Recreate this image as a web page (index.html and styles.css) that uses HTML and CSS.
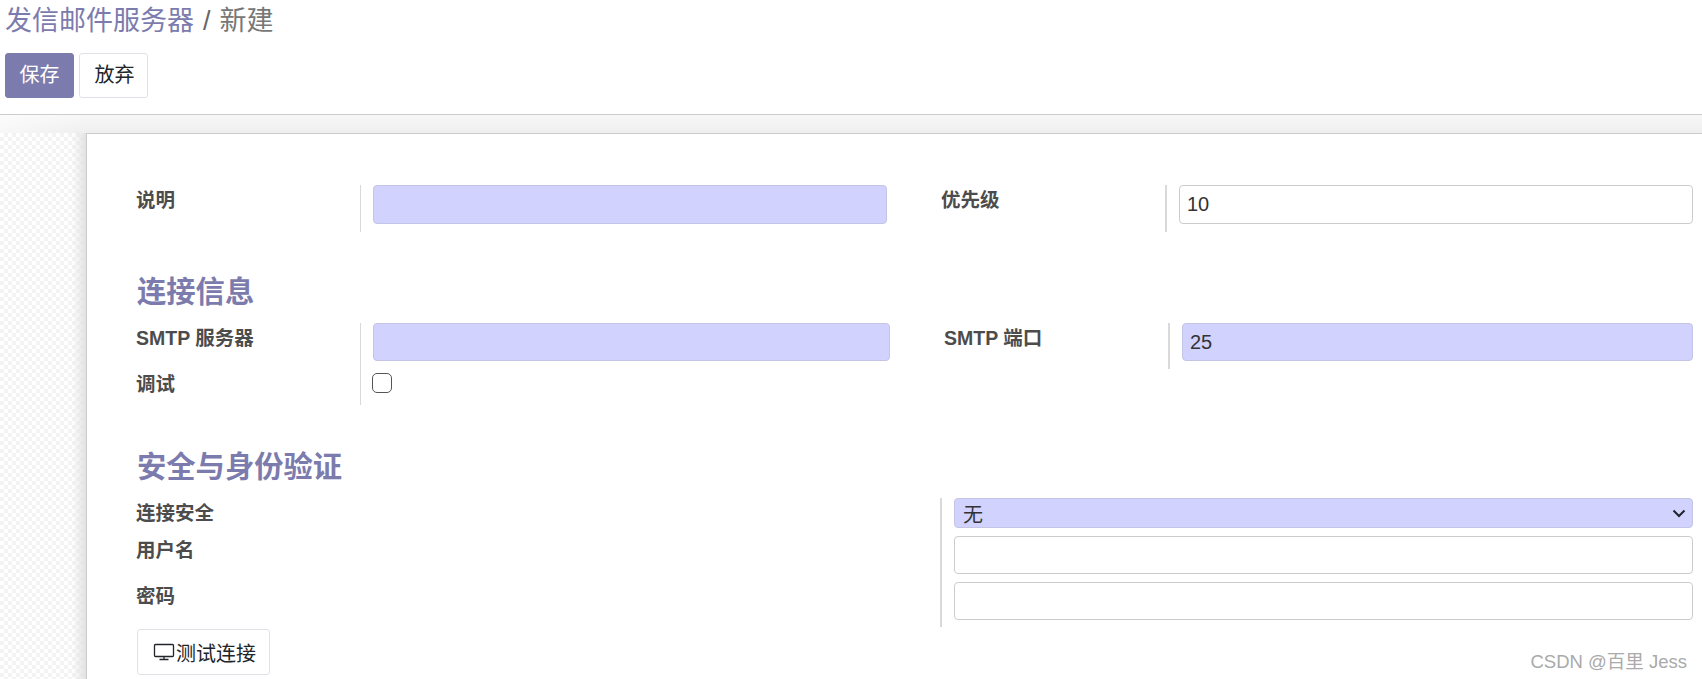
FILE: index.html
```html
<!DOCTYPE html>
<html lang="zh">
<head>
<meta charset="utf-8">
<title>发信邮件服务器</title>
<link rel="stylesheet" href="styles.css">
</head>
<body>
<header class="control-panel">
  <div class="breadcrumb"><span class="crumb-link">发信邮件服务器</span><span class="crumb-sep">/</span><span class="crumb-current">新建</span></div>
  <div class="actions">
    <button class="btn btn-primary" type="button"><span class="btn-text">保存</span></button>
    <button class="btn btn-secondary" type="button"><span class="btn-text">放弃</span></button>
  </div>
</header>
<main class="content">
  <section class="sheet">
    <div class="row row-top">
      <div class="label label-first">说明</div>
      <div class="values values-a"><div class="field field-req"></div></div>
      <div class="label label-second">优先级</div>
      <div class="values values-b"><div class="field">10</div></div>
    </div>
    <h2 class="section-title title-conn">连接信息</h2>
    <div class="row row-conn">
      <div class="labels-stack">
        <div class="label label-first label-smtp">SMTP 服务器</div>
        <div class="label label-first label-debug">调试</div>
      </div>
      <div class="values values-c">
        <div class="field field-req"></div>
        <span class="checkbox"></span>
      </div>
      <div class="label label-second label-port">SMTP 端口</div>
      <div class="values values-d"><div class="field field-req">25</div></div>
    </div>
    <h2 class="section-title title-sec">安全与身份验证</h2>
    <div class="row row-sec">
      <div class="labels-stack labels-sec">
        <div class="label label-first label-s1">连接安全</div>
        <div class="label label-first label-s2">用户名</div>
        <div class="label label-first label-s3">密码</div>
      </div>
      <div class="values values-e">
        <div class="select"><span>无</span>
          <svg class="chevron" viewBox="0 0 14 9" width="14" height="9"><path d="M1.5 1.5 7 7l5.5-5.5" fill="none" stroke="#212529" stroke-width="2"/></svg>
        </div>
        <div class="field"></div>
        <div class="field"></div>
      </div>
    </div>
    <button class="btn btn-secondary btn-test" type="button">
      <svg class="monitor" viewBox="0 0 22 18" width="22" height="18"><path d="M2.5 1.5h17a1 1 0 0 1 1 1v10a1 1 0 0 1-1 1h-17a1 1 0 0 1-1-1v-10a1 1 0 0 1 1-1zM11 13.5v2.5M6.5 16.5h9" fill="none" stroke="#212529" stroke-width="1.3"/></svg><span>测试连接</span>
    </button>
  </section>
</main>
<div class="watermark">CSDN @百里 Jess</div>
</body>
</html>
```

FILE: styles.css
```css
* { box-sizing: border-box; }
html, body { margin: 0; height: 100%; overflow: hidden; }
body {
  position: relative;
  background: #fff;
  color: #212529;
  font-family: "Liberation Sans", "Noto Sans CJK SC", sans-serif;
  font-size: 20px;
}
.control-panel { height: 115px; border-bottom: 1px solid #ccc; padding: 0 0 0 5px; }
.breadcrumb { height: 53px; padding-top: 4px; font-size: 27px; line-height: 34px; color: #7c7bad; white-space: nowrap; }
.crumb-sep { color: #666; margin: 0 9px; }
.crumb-current { color: #777; }
.actions { display: flex; gap: 5px; }
.btn {
  font-family: inherit;
  font-size: 20px;
  border-radius: 3px;
  height: 45px;
  width: 69px;
  padding: 0;
  display: flex;
  align-items: center;
  justify-content: center;
}
.btn-text { position: relative; top: -2px; }
.btn-secondary .btn-text { left: 1px; }
.btn-primary { background: #7c7bad; border: 1px solid #7c7bad; color: #fff; }
.btn-secondary { background: #fff; border: 1px solid #dee2e6; color: #212529; }
.content {
  height: 564px;
  padding: 18px 0 0 86px;
  background-color: #fff;
  background-image:
    linear-gradient(to right, rgba(255,255,255,.55) 0, rgba(255,255,255,0) 90px),
    linear-gradient(to bottom, #f7f7f7 0, #eeeeee 18px),
    linear-gradient(to right, rgba(226,226,226,0) 72px, #e2e2e2 86px, #e2e2e2 100%),
    repeating-conic-gradient(#f3f3f3 0 25%, #fff 0 50%);
  background-size: 100% 18px, 100% 18px, 100% 100%, 8px 8px;
  background-position: 0 0, 0 0, 0 18px, 0 18px;
  background-repeat: no-repeat, no-repeat, no-repeat, repeat;
}
.sheet {
  height: 546px;
  background: #fff;
  border-top: 1px solid #ccc;
  border-left: 1px solid #ccc;
  padding: 51px 9px 0 49px;
}
.row { display: flex; align-items: flex-start; }
.label { font-weight: 700; font-size: 19.5px; line-height: 24px; color: #4c4c4c; white-space: nowrap; }
.label-first { width: 224px; }
.label-second { width: 224px; margin-left: 54px; }
.values { border-left: 1px solid #d9d9d9; padding-left: 12px; }
.values-a { height: 47px; width: 527px; }
.values-b { height: 47px; flex: 1; border-left-width: 2px; padding-left: 12px; }
.row-top .label { padding-top: 3px; }
.field {
  height: 38px;
  border: 1px solid #ccc;
  border-radius: 4px;
  padding: 0 7px;
  font-size: 20px;
  line-height: 36px;
  color: #333;
  background: #fff;
}
.row-top .field { height: 39px; line-height: 37px; }
.field-req { background: #d2d2ff; border-color: #c4c4e4; }
.section-title { margin: 0 0 0 1px; font-size: 29.3px; line-height: 36px; font-weight: 700; color: #7c7bad; }
.title-conn { margin-top: 42px; }
.row-conn { margin-top: 13px; }
.labels-stack { width: 224px; }
.label-smtp { margin-top: 3px; }
.label-debug { margin-top: 22px; }
.values-c { height: 82px; width: 530px; }
.checkbox {
  display: block;
  margin: 12px 0 0 -1px;
  width: 20px;
  height: 20px;
  border: 1.5px solid #555;
  border-radius: 5px;
}
.label-port { padding-top: 3px; }
.values-d { height: 46px; flex: 1; border-left-width: 2px; padding-left: 12px; }
.title-sec { margin-top: 44px; }
.row-sec { margin-top: 13px; }
.labels-sec { width: 804px; }
.label-s1 { margin-top: 3px; }
.label-s2 { margin-top: 13px; }
.label-s3 { margin-top: 22px; }
.values-e { flex: 1; height: 129px; border-left-width: 2px; padding-left: 12px; display: flex; flex-direction: column; gap: 8px; }
.select {
  height: 30px;
  background: #d2d2ff;
  border: 1px solid #c4c4e4;
  border-radius: 4px;
  padding: 0 7px 0 8px;
  display: flex;
  align-items: center;
  justify-content: space-between;
  font-size: 20px;
  color: #333;
}
.chevron { margin-right: -1px; }
.btn-test { width: 133px; height: 46px; margin: 2px 0 0 1px; gap: 1px; padding-left: 2px; }
.watermark {
  position: absolute;
  right: 15px;
  top: 651px;
  font-size: 18.5px;
  line-height: 22px;
  color: #aaa;
  white-space: nowrap;
}
```
